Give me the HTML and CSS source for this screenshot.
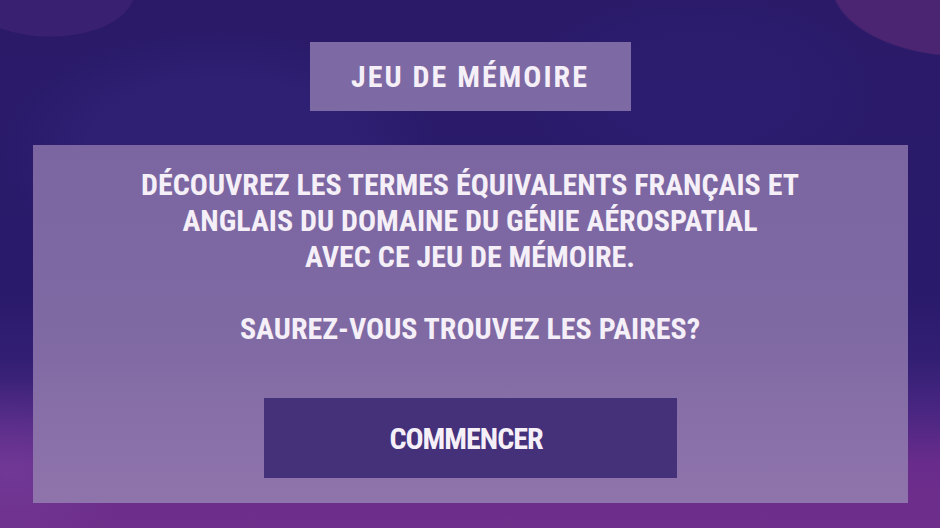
FILE: index.html
```html
<!DOCTYPE html>
<html lang="fr">
<head>
<meta charset="utf-8">
<title>Jeu de mémoire</title>
<link rel="stylesheet" href="styles.css">
</head>
<body>
<main class="screen">
  <h1 class="title">Jeu de mémoire</h1>
  <section class="panel">
    <p class="intro">Découvrez les termes équivalents français et<br>anglais du domaine du génie aérospatial<br>avec ce jeu de mémoire.</p>
    <p class="question">Saurez-vous trouvez les paires?</p>
    <button class="start" type="button">Commencer</button>
  </section>
</main>
</body>
</html>
```

FILE: styles.css
```css
html, body {
  margin: 0;
  padding: 0;
}

body {
  width: 940px;
  height: 528px;
  overflow: hidden;
  font-family: "Roboto Condensed", "Open Sans", sans-serif;
  font-stretch: condensed;
  font-weight: bold;
  color: #f5eff8;
  background:
    radial-gradient(ellipse 85px 45px at 50px -8px, #3a2070 98%, rgba(58, 32, 112, 0) 100%),
    radial-gradient(ellipse 135px 75px at 965px -18px, #4b2571 98%, rgba(75, 37, 113, 0) 100%),
    radial-gradient(ellipse 220px 120px at 220px 150px, rgba(48, 34, 120, 0.7) 60%, rgba(48, 34, 120, 0) 100%),
    radial-gradient(ellipse 180px 100px at 700px 90px, rgba(45, 30, 115, 0.6) 55%, rgba(45, 30, 115, 0) 100%),
    radial-gradient(ellipse 120px 90px at 10px 470px, rgba(120, 70, 160, 0.45), rgba(120, 70, 160, 0) 100%),
    linear-gradient(180deg, #2a1a68 0%, #2a1a6b 55%, #321f74 68%, #4a2682 78%, #6a2c8c 88%, #6e2e8a 100%);
}

.screen {
  height: 528px;
  display: flex;
  flex-direction: column;
  align-items: center;
}

.title {
  margin: 42px 0 0;
  width: 321px;
  height: 69px;
  display: flex;
  align-items: center;
  justify-content: center;
  background: #7d69a3;
  font-size: 30px;
  font-weight: bold;
  text-transform: uppercase;
  letter-spacing: 2px;
}

.panel {
  margin-top: 34px;
  width: 875px;
  height: 358px;
  box-sizing: border-box;
  padding-top: 22px;
  display: flex;
  flex-direction: column;
  align-items: center;
  background: linear-gradient(180deg, #7b66a2 0%, #7f69a3 50%, #8f74ab 100%);
  text-align: center;
  text-transform: uppercase;
  font-size: 30px;
  line-height: 36px;
}

.intro {
  margin: 0;
}

.question {
  margin: 36px 0 0;
}

.start {
  margin-top: 51px;
  width: 413px;
  height: 80px;
  padding: 0 8px 0 0;
  border: 0;
  background: #45307a;
  color: #f5eff8;
  font-family: inherit;
  font-stretch: inherit;
  font-weight: bold;
  font-size: 30px;
  letter-spacing: -1px;
  text-transform: uppercase;
  cursor: pointer;
}
```
